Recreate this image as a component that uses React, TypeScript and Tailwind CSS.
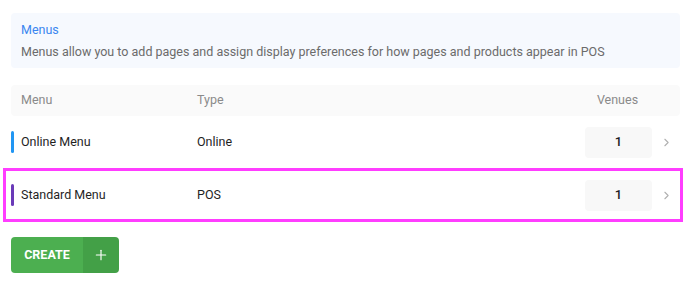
import { ChevronRight, Plus } from "lucide-react";

const menus = [
  { name: "Online Menu", type: "Online", venues: 1, bar: "bg-[#2196f3]", selected: false },
  { name: "Standard Menu", type: "POS", venues: 1, bar: "bg-[#6a3ab8]", selected: true },
];

export default function App() {
  return (
    <div className="min-h-screen bg-white pl-[11px] pr-[8px] pt-[13px] font-['Roboto',sans-serif] text-[12.5px]">
      <div className="flex h-[55px] flex-col justify-center gap-[6px] rounded-[4px] bg-[#f6f9fe] px-[10px]">
        <div className="leading-4 text-[#3a86f0]">Menus</div>
        <div className="leading-4 text-[#6b6b6b]">
          Menus allow you to add pages and assign display preferences for how pages and products appear in POS
        </div>
      </div>

      <div className="mt-[17px] flex h-[31px] items-center rounded-[4px] bg-[#fafafa] pl-[10px] pr-[29px] text-[#8a8a8a]">
        <div className="w-[176px]">Menu</div>
        <div className="flex-1">Type</div>
        <div className="w-[67px] text-center">Venues</div>
      </div>

      {menus.map((m) => (
        <div
          key={m.name}
          className={
            m.selected
              ? "-ml-[8px] -mr-[3px] flex h-[54px] items-center border-[3px] border-[#ff3dff] pl-[5px] pr-[7px] text-[#1f1f1f]"
              : "flex h-[52px] items-center pr-[7px] text-[#1f1f1f]"
          }
        >
          <div className={`h-[22px] w-[3px] rounded-full ${m.bar}`} />
          <div className="w-[183px] pl-[7px]">{m.name}</div>
          <div className="flex-1">{m.type}</div>
          <div className="flex h-[31px] w-[67px] items-center justify-center rounded-[4px] bg-[#f8f8f8] text-[13px] font-medium">
            {m.venues}
          </div>
          <ChevronRight className="ml-[8px] size-[13px] text-[#b0b0b0]" strokeWidth={2} />
        </div>
      ))}

      <div className="mt-[15px] flex h-[36px] w-[108px] overflow-hidden rounded-[4px] text-white">
        <div className="flex w-[72px] items-center justify-center bg-[#4caf50] text-[12.5px] font-bold">
          CREATE
        </div>
        <div className="flex flex-1 items-center justify-center bg-[#43a047]">
          <Plus className="size-[16px]" strokeWidth={1.75} />
        </div>
      </div>
    </div>
  );
}
